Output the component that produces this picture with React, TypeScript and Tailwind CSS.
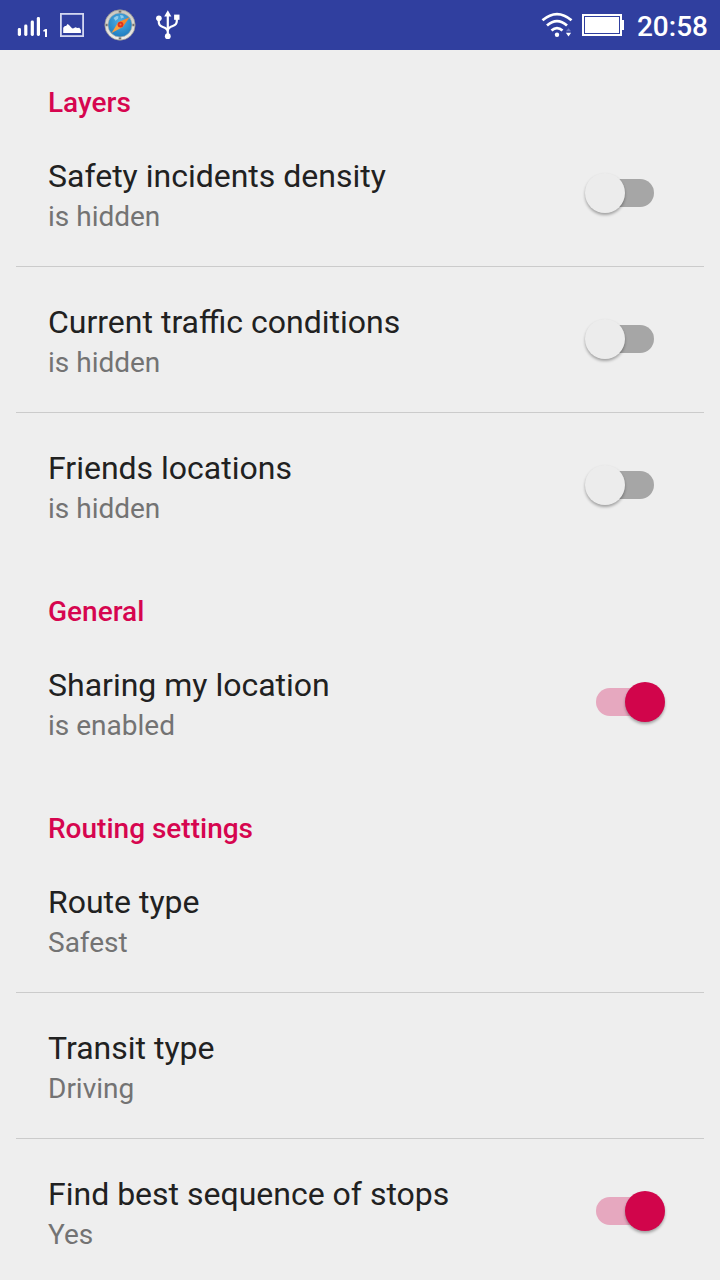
import clsx from 'clsx';

type Item = { title: string; summary: string; checked?: boolean };
type Section = { name: string; items: Item[] };

const sections: Section[] = [
  {
    name: 'Layers',
    items: [
      { title: 'Safety incidents density', summary: 'is hidden', checked: false },
      { title: 'Current traffic conditions', summary: 'is hidden', checked: false },
      { title: 'Friends locations', summary: 'is hidden', checked: false },
    ],
  },
  {
    name: 'General',
    items: [{ title: 'Sharing my location', summary: 'is enabled', checked: true }],
  },
  {
    name: 'Routing settings',
    items: [
      { title: 'Route type', summary: 'Safest' },
      { title: 'Transit type', summary: 'Driving' },
      { title: 'Find best sequence of stops', summary: 'Yes', checked: true },
    ],
  },
];

function SignalIcon() {
  return (
    <svg width="32" height="24" viewBox="0 0 32 24" fill="#fff">
      <rect x="1.8" y="15" width="3.2" height="8" rx="1.4" />
      <rect x="8.2" y="11.5" width="3.2" height="11.5" rx="1.4" />
      <rect x="14.7" y="7.5" width="3.2" height="15.5" rx="1.4" />
      <rect x="20.8" y="4" width="3.2" height="19" rx="1.4" />
      <path d="M27.3 18.6v-1.4l2-1.2h1.7v8h-2v-5.4z" />
    </svg>
  );
}

function PictureIcon() {
  return (
    <svg width="24" height="24" viewBox="0 0 24 24">
      <rect x="0.9" y="0.9" width="22.2" height="22.2" fill="none" stroke="#d3d7f0" strokeWidth="1.8" />
      <path
        d="M3.2 20v-5.2l1.7-1.9 1.2.2 1.4-2 1.5.8 3 3.3 1 .2 2.5-1.2 1.8.9 2-.4 1.6 2.2V20z"
        fill="#fff"
      />
    </svg>
  );
}

function CompassIcon() {
  return (
    <svg width="32" height="32" viewBox="0 0 32 32">
      <defs>
        <radialGradient id="sea" cx="0.5" cy="0.35" r="0.7">
          <stop offset="0" stopColor="#4fb0e4" />
          <stop offset="1" stopColor="#1a78bd" />
        </radialGradient>
        <linearGradient id="rim" x1="0" y1="0" x2="0" y2="1">
          <stop offset="0" stopColor="#c9c7bf" />
          <stop offset="1" stopColor="#efeeea" />
        </linearGradient>
      </defs>
      <circle cx="16" cy="16" r="15.2" fill="url(#rim)" stroke="#8f8e8a" strokeWidth="0.7" />
      <circle cx="16" cy="16" r="12" fill="url(#sea)" stroke="#b5b2aa" strokeWidth="0.6" />
      <path d="M9.5 9l3-2 2 .2-.5 2.5-2.5 2zM16 6l3 .5 1 2-3 1z" fill="#b6def0" opacity="0.7" />
      <g fill="#77746e">
        <rect x="14.7" y="1.6" width="2.6" height="2" />
        <rect x="14.7" y="28.4" width="2.6" height="2" />
        <rect x="1.6" y="14.8" width="2" height="2.4" />
        <rect x="28.4" y="14.8" width="2" height="2.4" />
      </g>
      <path d="M25.6 8.2L18.8 18L14.2 13.2Z" fill="#f8882c" />
      <path d="M7.6 24L14.2 13.2L18.8 18Z" fill="#f9a040" />
      <circle cx="16.5" cy="15.6" r="2.9" fill="#e0301c" />
      <circle cx="16.5" cy="15.6" r="1" fill="#f0803e" />
    </svg>
  );
}

function UsbIcon() {
  return (
    <svg width="24" height="30" viewBox="0 0 24 30" fill="none" stroke="#fff" strokeWidth="2.2">
      <path d="M11.8 5v20M2.8 9v3c0 3 1.5 4.2 4 5 3 1 5 2.3 5 5M20.8 8v3c0 3-1.5 4.2-4 5-3 1-5 2.3-5 5" />
      <path d="M11.8 0.2l3.6 6.3H8.2z" fill="#fff" stroke="none" />
      <circle cx="11.8" cy="26.2" r="2.9" fill="#fff" stroke="none" />
      <circle cx="2.9" cy="8.2" r="2.8" fill="#fff" stroke="none" />
      <rect x="18.1" y="4.6" width="5.4" height="5.2" fill="#fff" stroke="none" />
    </svg>
  );
}

function WifiIcon() {
  return (
    <svg width="32" height="26" viewBox="0 0 32 26" fill="none" stroke="#fff" strokeWidth="2.8">
      <path d="M1.5 8.3Q16-4 30.5 8.3" />
      <path d="M6 13.5Q16 4.8 26 13.5" />
      <path d="M10.5 18.5Q16 13.7 21.5 18.5" />
      <circle cx="16" cy="22.8" r="2.2" fill="#fff" stroke="none" />
      <path d="M24.9 19.2L27.5 16.2L30.1 19.2z" fill="#6b77c0" stroke="none" />
      <path d="M24.9 20.8h5.2L27.5 24.6z" fill="#fff" stroke="none" />
    </svg>
  );
}

function BatteryIcon() {
  return (
    <svg width="42" height="22" viewBox="0 0 42 22" fill="#fff">
      <rect x="1" y="1" width="38" height="20" fill="none" stroke="#fff" strokeWidth="2" />
      <rect x="3" y="3" width="34" height="16" />
      <rect x="2.5" y="2.5" width="35" height="17" fill="none" stroke="#303f9f" />
      <rect x="40" y="6" width="2" height="10" />
    </svg>
  );
}

function StatusBar() {
  return (
    <header className="flex h-[50px] items-center bg-[#303f9f] text-white">
      <div className="flex flex-1 items-center pl-4">
        <SignalIcon />
        <div className="ml-3">
          <PictureIcon />
        </div>
        <div className="ml-5">
          <CompassIcon />
        </div>
        <div className="ml-5">
          <UsbIcon />
        </div>
      </div>
      <WifiIcon />
      <div className="ml-[9px]">
        <BatteryIcon />
      </div>
      <span className="ml-[13px] mr-3 pt-[3px] text-[28px] font-medium leading-none">20:58</span>
    </header>
  );
}

function Toggle({ checked }: { checked: boolean }) {
  return (
    <div className="relative h-10 w-20 shrink-0">
      <div
        className={clsx(
          'absolute top-1.5 left-[11px] h-7 w-[58px] rounded-full',
          checked ? 'bg-[#e6a8bf]' : 'bg-[#a6a6a6]',
        )}
      />
      <div
        className={clsx(
          'absolute top-0 size-10 rounded-full shadow-[0_2px_3px_rgba(0,0,0,0.32)]',
          checked ? 'right-0 bg-[#d1054b]' : 'left-0 bg-[#ececec]',
        )}
      />
    </div>
  );
}

function Row({ item }: { item: Item }) {
  return (
    <div className="mx-4 flex h-[146px] items-start border-b border-[#cbcbcb] pl-8 pr-[39px] last:border-transparent">
      <div className="flex-1 pt-[35px]">
        <div className="text-[32px] leading-10 text-[#212121]">{item.title}</div>
        <div className="pt-px text-[28px] leading-10 text-[#737373]">{item.summary}</div>
      </div>
      {item.checked !== undefined && (
        <div className="pt-[52px]">
          <Toggle checked={item.checked} />
        </div>
      )}
    </div>
  );
}

export default function App() {
  return (
    <div className="h-screen overflow-hidden bg-[#eeeeee] font-['Roboto',sans-serif]">
      <StatusBar />
      {sections.map((section) => (
        <section key={section.name}>
          <h2 className="h-[71px] pl-12 pt-[33px] text-[28px] font-medium leading-10 text-[#d6054f]">
            {section.name}
          </h2>
          <div>
            {section.items.map((item) => (
              <Row key={item.title} item={item} />
            ))}
          </div>
        </section>
      ))}
    </div>
  );
}
